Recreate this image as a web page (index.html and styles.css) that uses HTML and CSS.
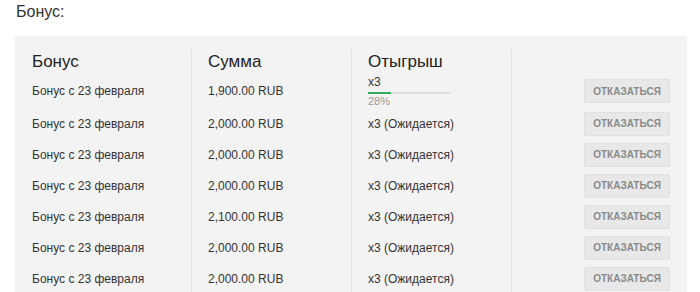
FILE: index.html
```html
<!DOCTYPE html>
<html lang="ru">
<head>
<meta charset="utf-8">
<link rel="stylesheet" href="styles.css">
</head>
<body>
<div class="title">Бонус:</div>
<div class="panel">
  <div class="grid">
    <div class="cell head">Бонус</div>
    <div class="cell head sep">Сумма</div>
    <div class="cell head sep">Отыгрыш</div>
    <div class="cell head sep"></div>

    <div class="cell first">Бонус с 23 февраля</div>
    <div class="cell first sep">1,900.00 RUB</div>
    <div class="cell first sep progress-cell">
      <div class="mult">x3</div>
      <div class="bar"><div class="fill" style="width:28%"></div></div>
      <div class="pct">28%</div>
    </div>
    <div class="cell first sep act"><button class="btn">Отказаться</button></div>

    <div class="cell">Бонус с 23 февраля</div>
    <div class="cell sep">2,000.00 RUB</div>
    <div class="cell sep">x3 (Ожидается)</div>
    <div class="cell sep act"><button class="btn">Отказаться</button></div>

    <div class="cell">Бонус с 23 февраля</div>
    <div class="cell sep">2,000.00 RUB</div>
    <div class="cell sep">x3 (Ожидается)</div>
    <div class="cell sep act"><button class="btn">Отказаться</button></div>

    <div class="cell">Бонус с 23 февраля</div>
    <div class="cell sep">2,000.00 RUB</div>
    <div class="cell sep">x3 (Ожидается)</div>
    <div class="cell sep act"><button class="btn">Отказаться</button></div>

    <div class="cell">Бонус с 23 февраля</div>
    <div class="cell sep">2,100.00 RUB</div>
    <div class="cell sep">x3 (Ожидается)</div>
    <div class="cell sep act"><button class="btn">Отказаться</button></div>

    <div class="cell">Бонус с 23 февраля</div>
    <div class="cell sep">2,000.00 RUB</div>
    <div class="cell sep">x3 (Ожидается)</div>
    <div class="cell sep act"><button class="btn">Отказаться</button></div>

    <div class="cell">Бонус с 23 февраля</div>
    <div class="cell sep">2,000.00 RUB</div>
    <div class="cell sep">x3 (Ожидается)</div>
    <div class="cell sep act"><button class="btn">Отказаться</button></div>
  </div>
</div>
</body>
</html>
```

FILE: styles.css
```css
html, body {
  margin: 0;
  padding: 0;
  background: #fff;
}
body {
  font-family: "Liberation Sans", Arial, sans-serif;
  color: #333;
  padding: 2px 13px 0 15px;
}
.title {
  font-size: 16px;
  line-height: 20px;
  color: #333;
  padding-left: 1px;
  height: 34px;
}
.panel {
  background: #f3f3f3;
  width: 655px;
  padding: 14px 17px 0 0;
  height: 242px;
  overflow: hidden;
}
.grid {
  display: grid;
  grid-template-columns: 176px 160px 160px 159px;
  grid-template-rows: 24px 34px repeat(6, 31px);
}
.cell {
  padding-left: 17px;
  font-size: 12px;
  color: #333;
  display: flex;
  align-items: center;
}
.sep {
  border-left: 1px solid #e3e3e3;
  padding-left: 16px;
}
.head {
  font-size: 17px;
  color: #222;
  align-items: flex-start;
  padding-top: 2px;
}
.progress-cell {
  flex-direction: column;
  align-items: flex-start;
  justify-content: flex-start;
  padding-top: 1px;
}
.mult {
  font-size: 12px;
  line-height: 14px;
}
.bar {
  width: 82px;
  height: 2px;
  background: #dedede;
  margin-top: 3px;
}
.fill {
  height: 2px;
  background: #2fae5a;
}
.pct {
  font-size: 11px;
  line-height: 13px;
  color: #999;
  margin-top: 1px;
}
.act {
  justify-content: flex-end;
}
.btn {
  width: 86px;
  height: 24px;
  background: #e8e8e8;
  border: 1px solid #e0e0e0;
  border-radius: 2px;
  font-family: "Liberation Sans", Arial, sans-serif;
  font-size: 10px;
  font-weight: bold;
  color: #8a8a8a;
  text-transform: uppercase;
  padding: 0;
}
```
